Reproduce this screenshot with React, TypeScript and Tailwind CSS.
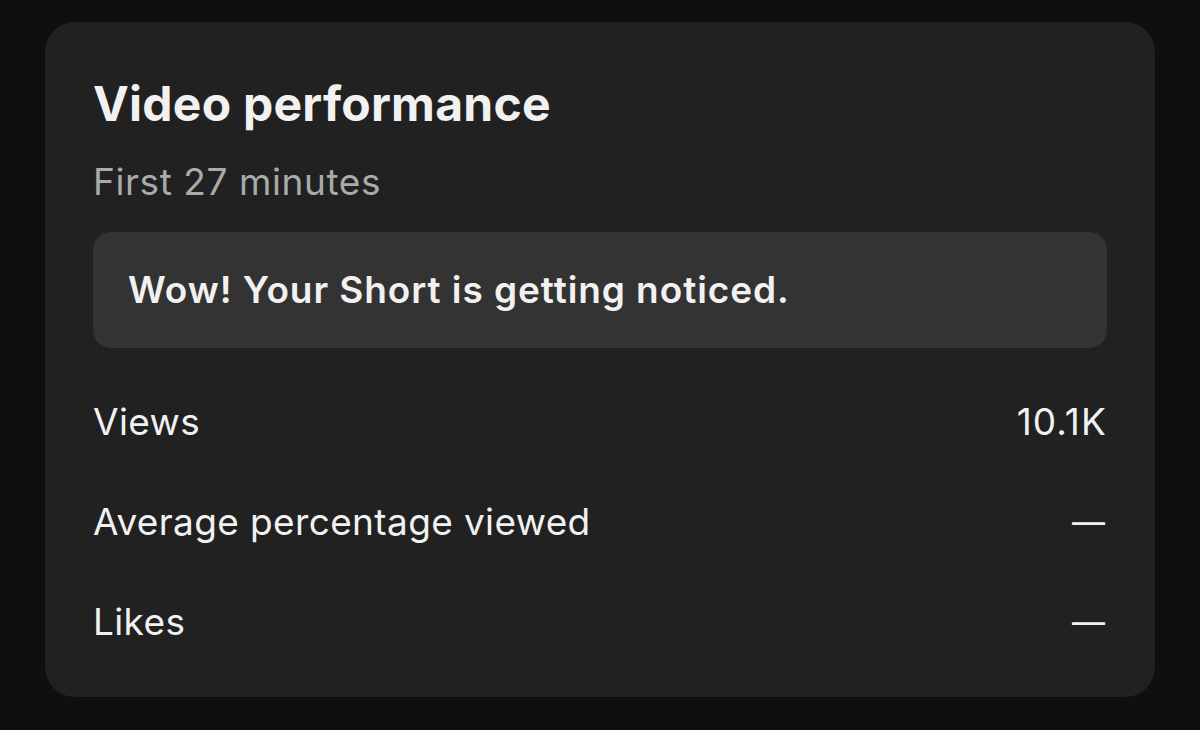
const rows = [
  { label: "Views", value: "10.1K" },
  { label: "Average percentage viewed", value: "—" },
  { label: "Likes", value: "—" },
];

const App = () => {
  return (
    <div className="h-[730px] w-[1200px] bg-[#0f0f0f] px-[45px] pt-[22px] font-['Inter',sans-serif] text-[#f1f1f1]">
      <section className="h-[675px] rounded-[30px] bg-[#212121] pl-[48px] pr-[48px] pt-[58px]">
        {/* Header */}
        <h1 className="text-[48px] font-bold leading-[48px] tracking-[0.005em]">Video performance</h1>
        <p className="mt-[36px] text-[37px] leading-[36px] tracking-[0.016em] text-[#aaaaaa]">First 27 minutes</p>

        {/* Notice */}
        <div className="mt-[32px] flex h-[116px] items-center rounded-[18px] bg-[#333333] px-[35px]">
          <p className="text-[37px] font-semibold leading-[36px] tracking-[0.025em]">Wow! Your Short is getting noticed.</p>
        </div>

        {/* Stats */}
        <div className="mt-[24px] flex flex-col">
          {rows.map((r) => (
            <div key={r.label} className="flex h-[100px] items-center justify-between text-[37px] leading-[36px] tracking-[0.01em]">
              <span>{r.label}</span>
              {r.value === "—" ? (
                <span className="pr-[2px] text-[33px] tracking-normal">{r.value}</span>
              ) : (
                <span className="tracking-[0.03em]">{r.value}</span>
              )}
            </div>
          ))}
        </div>
      </section>
    </div>
  );
};

export default App;
